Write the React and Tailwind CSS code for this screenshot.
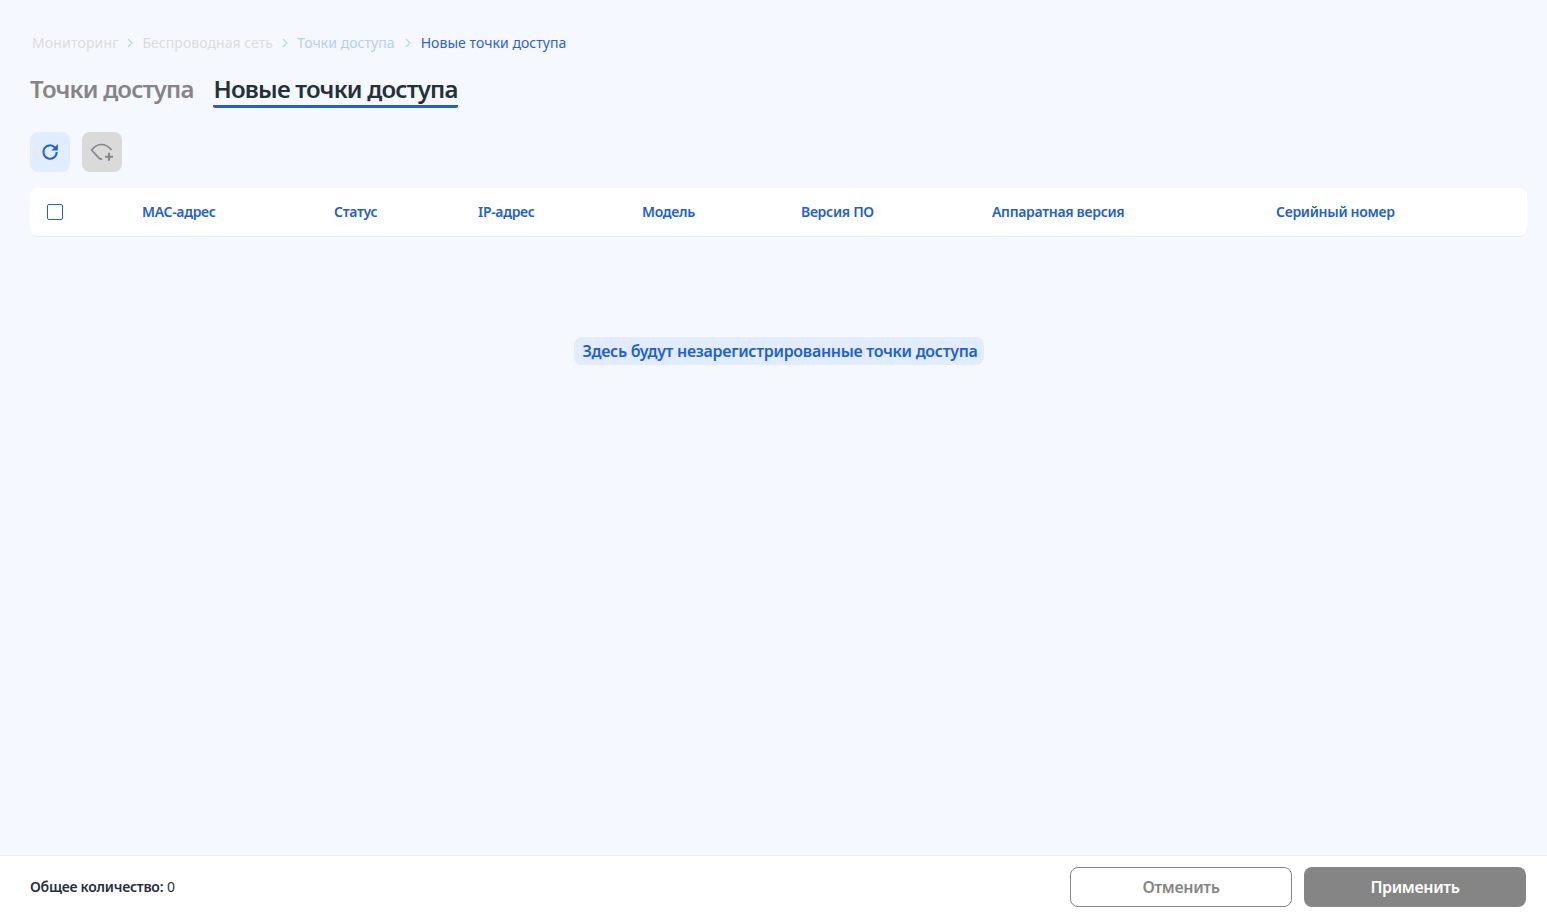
import React from "react";

const columns = [
	{ title: "MAC-адрес", width: "w-[192px]" },
	{ title: "Статус", width: "w-[144px]" },
	{ title: "IP-адрес", width: "w-[164px]" },
	{ title: "Модель", width: "w-[159px]" },
	{ title: "Версия ПО", width: "w-[191px]" },
	{ title: "Аппаратная версия", width: "w-[284px]" },
	{ title: "Серийный номер", width: "w-[200px]" },
];

const Chevron = () => (
	<svg width="6" height="10" viewBox="0 0 6 10" fill="none" className="shrink-0">
		<path d="M1 1l4 4-4 4" stroke="#bcd4f8" strokeWidth="1.2" />
	</svg>
);

const App = () => {
	return (
		<div className="h-[913px] w-[1547px] overflow-hidden bg-[#f5f8ff] flex flex-col font-['Noto_Sans',sans-serif]">
			<div className="flex-1 px-[30px] pt-[34px]">
				<div className="flex items-center h-[18px] pl-[2px] text-[14px] leading-[18px] tracking-[0.05px]">
					<span className="text-[#dcdcdc] tracking-[0.15px]">Мониторинг</span>
					<span className="mx-[9px]"><Chevron /></span>
					<span className="text-[#dcdcdc]">Беспроводная сеть</span>
					<span className="mx-[9px]"><Chevron /></span>
					<span className="text-[#b5cffa]">Точки доступа</span>
					<span className="mx-[10px]"><Chevron /></span>
					<span className="text-[#2f5fd0]">Новые точки доступа</span>
				</div>

				<div className="flex items-start gap-[19px] mt-[20px] text-[24px] leading-[34px] font-semibold tracking-[-0.8px]">
					<span className="text-[#858585]">Точки доступа</span>
					<span className="text-[#25303a] pl-[1px] border-b-[3px] border-[#2360cc] rounded-b-[2px] h-[36px]">
						Новые точки доступа
					</span>
				</div>

				<div className="flex gap-[12px] mt-[24px]">
					<button className="w-[40px] h-[40px] rounded-[8px] bg-[#e1edff] flex items-center justify-center">
						<svg width="18" height="18" viewBox="0 0 18 18" fill="none">
							<path d="M14 4.600A6.700 6.700 0 1 0 15.700 9" stroke="#2360cc" strokeWidth="2" />
							<path d="M16.800 1v6.400h-6.400z" fill="#2360cc" />
						</svg>
					</button>
					<button className="w-[40px] h-[40px] rounded-[8px] bg-[#dadada] flex items-center justify-center">
						<svg width="24" height="18" viewBox="0 0 24 18" fill="none">
							<path d="M21.500 7C18.500 3.500 15 1.500 11.500 1.500 8 1.500 4.500 3.500 1.500 7L9.500 15.500a2 2 0 0 0 2.500 0" stroke="#878787" strokeWidth="1.700" />
							<path d="M19 9.800v8M15 13.800h8" stroke="#878787" strokeWidth="2" />
						</svg>
					</button>
				</div>

				<div className="flex items-center h-[49px] w-[1497px] mt-[16px] pb-[1px] bg-white rounded-[8px] border-b border-[#e6edf8] text-[14px] font-semibold tracking-[-0.3px] text-[#2360cc]">
					<span className="w-[112px] pl-[17px] shrink-0">
						<span className="block w-[16px] h-[16px] rounded-[2px] border-[1.5px] border-[#2360cc] bg-white" />
					</span>
					{columns.map((col) => (
						<span key={col.title} className={`${col.width} shrink-0`}>
							{col.title}
						</span>
					))}
				</div>

				<div className="flex justify-center mt-[100px] pl-[11px]">
					<span className="h-[28px] pl-[8px] pr-[6px] rounded-[8px] bg-[#e1edff] text-[16px] leading-[28px] font-semibold tracking-[-0.3px] text-[#2360cc]">
						Здесь будут незарегистрированные точки доступа
					</span>
				</div>
			</div>

			<div className="h-[58px] shrink-0 bg-white border-t border-[#e8ecf3] flex items-center justify-between pt-[4px] pl-[30px] pr-[21px]">
				<div className="text-[14px] text-[#25303a]">
					<span className="font-semibold tracking-[-0.25px]">Общее количество:</span> 0
				</div>
				<div className="flex gap-[12px]">
					<button className="w-[222px] h-[40px] rounded-[8px] border border-[#858585] bg-white text-[16px] font-semibold text-[#858585] tracking-[-0.35px]">
						Отменить
					</button>
					<button className="w-[222px] h-[40px] rounded-[8px] bg-[#858585] text-[16px] font-semibold text-white tracking-[-0.35px]">
						Применить
					</button>
				</div>
			</div>
		</div>
	);
};

export default App;
